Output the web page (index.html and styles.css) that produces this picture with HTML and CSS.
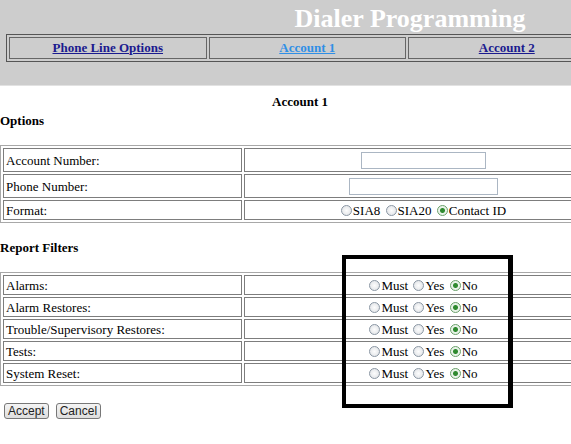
FILE: index.html
```html
<!DOCTYPE html>
<html lang="en">
<head>
    <meta charset="UTF-8">
    <meta name="viewport" content="width=device-width, initial-scale=1.0">
    <title>Dialer Programming</title>
    <link rel="stylesheet" href="styles.css">
</head>
<body>
    <div class="page">
        <header class="top">
            <h1 class="title">Dialer Programming</h1>
            <table class="nav">
                <tr>
                    <td><a href="#">Phone Line Options</a></td>
                    <td><a href="#" class="current">Account 1</a></td>
                    <td><a href="#">Account 2</a></td>
                    <td></td>
                </tr>
            </table>
        </header>

        <form class="main">
            <p class="account-title">Account 1</p>

            <p class="section">Options</p>
            <table class="grid options">
                <tr class="tall">
                    <td class="label">Account Number:</td>
                    <td class="value"><input type="text" class="field short" name="account"></td>
                </tr>
                <tr class="tall">
                    <td class="label">Phone Number:</td>
                    <td class="value"><input type="text" class="field long" name="phone"></td>
                </tr>
                <tr>
                    <td class="label">Format:</td>
                    <td class="value">
                        <label><input type="radio" class="radio" name="format">SIA8</label>
                        <label><input type="radio" class="radio" name="format">SIA20</label>
                        <label><input type="radio" class="radio" name="format" checked>Contact ID</label>
                    </td>
                </tr>
            </table>

            <p class="section filters">Report Filters</p>
            <table class="grid report">
                <tr>
                    <td class="label">Alarms:</td>
                    <td class="value">
                        <label><input type="radio" class="radio" name="alarms">Must</label>
                        <label><input type="radio" class="radio" name="alarms">Yes</label>
                        <label><input type="radio" class="radio" name="alarms" checked>No</label>
                    </td>
                </tr>
                <tr>
                    <td class="label">Alarm Restores:</td>
                    <td class="value">
                        <label><input type="radio" class="radio" name="restores">Must</label>
                        <label><input type="radio" class="radio" name="restores">Yes</label>
                        <label><input type="radio" class="radio" name="restores" checked>No</label>
                    </td>
                </tr>
                <tr>
                    <td class="label">Trouble/Supervisory Restores:</td>
                    <td class="value">
                        <label><input type="radio" class="radio" name="trouble">Must</label>
                        <label><input type="radio" class="radio" name="trouble">Yes</label>
                        <label><input type="radio" class="radio" name="trouble" checked>No</label>
                    </td>
                </tr>
                <tr>
                    <td class="label">Tests:</td>
                    <td class="value">
                        <label><input type="radio" class="radio" name="tests">Must</label>
                        <label><input type="radio" class="radio" name="tests">Yes</label>
                        <label><input type="radio" class="radio" name="tests" checked>No</label>
                    </td>
                </tr>
                <tr>
                    <td class="label">System Reset:</td>
                    <td class="value">
                        <label><input type="radio" class="radio" name="reset">Must</label>
                        <label><input type="radio" class="radio" name="reset">Yes</label>
                        <label><input type="radio" class="radio" name="reset" checked>No</label>
                    </td>
                </tr>
            </table>

            <div class="buttons">
                <button type="submit" class="btn">Accept</button>
                <button type="reset" class="btn">Cancel</button>
            </div>
        </form>

        <!-- highlight frame around the filter choices -->
        <div class="mark"></div>
    </div>
</body>
</html>
```

FILE: styles.css
```css
html, body {
    overflow: hidden;
}
body {
    margin: 0;
    padding: 0;
    background-color: #fff;
    font-family: "Liberation Serif", "Times New Roman", serif;
    font-size: 13px;
    color: #000;
}
.page {
    position: relative;
    width: 820px;
}

/* header band */
.top {
    background-color: #cdcdcd;
    height: 86px;
    border-bottom: 1px solid #e2e2e2;
    box-sizing: border-box;
}
.title {
    margin: 0;
    padding-top: 3px;
    height: 31px;
    text-align: center;
    font-size: 26px;
    line-height: 31px;
    font-weight: bold;
    color: #fff;
}
.nav {
    margin-left: 6px;
    width: 802px;
    height: 28px;
    border: 1px solid #555;
    border-spacing: 2px;
    table-layout: fixed;
}
.nav td {
    border: 1px solid #666;
    padding: 0;
    text-align: center;
    font-weight: bold;
}
.nav a {
    color: #1b1b8f;
}
.nav a.current {
    color: #2f8fe6;
}

/* form area */
.main {
    width: 600px;
}
.account-title {
    margin: 8px 0 0;
    line-height: 15px;
    text-align: center;
    font-weight: bold;
}
.section {
    margin: 4px 0 0;
    line-height: 15px;
    font-weight: bold;
}
.section.filters {
    margin-top: 17px;
}
.grid {
    width: 600px;
    border: 1px solid #a8a8a8;
    border-spacing: 2px;
}
.options {
    margin-top: 17px;
}
.report {
    margin-top: 17px;
}
.grid td {
    border: 1px solid #7d7d7d;
    padding: 0 2px;
    height: 18px;
    line-height: 15px;
}
.grid tr.tall td {
    height: 22px;
}
.grid .label {
    width: 233px;
}
.grid .value {
    text-align: center;
    padding-left: 8px;
}
.value label {
    margin: 0 1px;
}

.field {
    height: 17px;
    box-sizing: border-box;
    border: 1px solid #abb6c3;
    padding: 0 2px;
    margin: 0;
    vertical-align: middle;
}
.field.short {
    width: 125px;
}
.field.long {
    width: 149px;
}

.radio {
    appearance: none;
    -webkit-appearance: none;
    width: 11px;
    height: 11px;
    margin: 0 1px 0 0;
    border: 1px solid #8a96a3;
    border-radius: 50%;
    background: radial-gradient(circle, #fdfdfd 0, #dcdfe3 100%);
    vertical-align: -1px;
}
.radio:checked {
    border-color: #6aa06a;
    background: radial-gradient(circle, #2f8a2f 0 2px, #e9f3e9 3px);
}

.buttons {
    margin-top: 17px;
    padding-left: 4px;
    display: flex;
    gap: 7px;
}
.btn {
    font-family: "Liberation Sans", Arial, sans-serif;
    font-size: 12px;
    height: 16px;
    padding: 0 3px;
    border: 1px solid #777;
    border-radius: 3px;
    background: linear-gradient(#f4f4f4, #dedede);
    color: #222;
    line-height: 13px;
}

.mark {
    position: absolute;
    left: 342px;
    top: 255px;
    width: 162px;
    height: 145px;
    border: 4px solid #000;
    border-right-width: 5px;
    pointer-events: none;
}
```
